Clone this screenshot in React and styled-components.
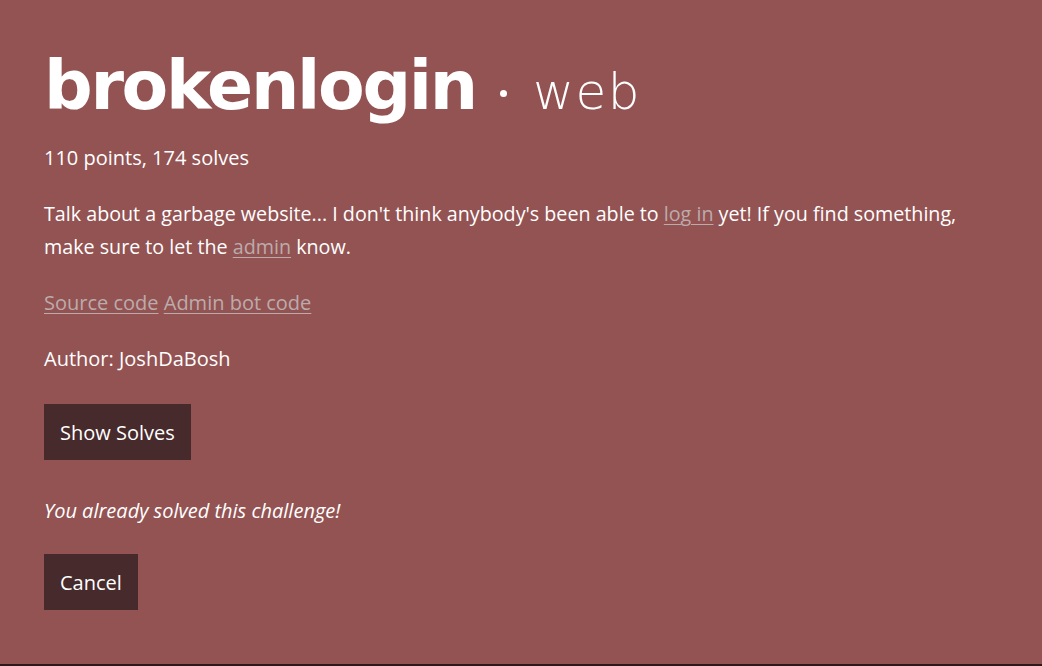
import React from "react";
import styled, { createGlobalStyle } from "styled-components";

const GlobalStyle = createGlobalStyle`
  html, body {
    margin: 0;
    padding: 0;
    background: #2a1a1b;
  }
  body {
    font-family: "Open Sans", "Noto Sans", sans-serif;
    color: #ffffff;
  }
`;

const Modal = styled.div`
  box-sizing: border-box;
  width: 1042px;
  height: 664px;
  background: #935353;
  padding: 48px 44px 0;
  display: flex;
  flex-direction: column;
  align-items: flex-start;
`;

const Title = styled.h1`
  margin: 0;
  font-family: "DejaVu Sans", sans-serif;
  font-weight: 700;
  font-size: 68px;
  line-height: 76px;
  letter-spacing: -2.3px;
  white-space: nowrap;
`;

const Dot = styled.span`
  display: inline-block;
  width: 7px;
  height: 7px;
  border-radius: 50%;
  background: #ffffff;
  margin: 0 26px 0 24px;
  vertical-align: 12px;
`;

const Category = styled.span`
  font-weight: 200;
  font-size: 50px;
  line-height: 1;
  letter-spacing: 1.5px;
`;

const Meta = styled.div`
  margin-top: 21px;
  font-size: 20px;
  line-height: 26px;
`;

const Text = styled.p`
  margin: ${(p) => p.$top || 0}px 0 0;
  font-size: ${(p) => p.$size || 20}px;
  line-height: 33px;
  font-style: ${(p) => (p.$italic ? "italic" : "normal")};
`;

const Link = styled.a`
  color: #bcabab;
  text-decoration: underline;
  text-decoration-thickness: 1px;
  text-underline-offset: 3px;
`;

const Button = styled.button`
  margin-top: ${(p) => p.$top}px;
  height: 56px;
  padding: 0 16px;
  border: none;
  background: #472a2b;
  color: #ffffff;
  font-family: "Open Sans", "Noto Sans", sans-serif;
  font-size: 20px;
  cursor: pointer;
`;

export default function App() {
  return (
    <>
      <GlobalStyle />
      <Modal>
        <Title>
          brokenlogin<Dot />
          <Category>web</Category>
        </Title>
        <Meta>110 points, 174 solves</Meta>
        <Text $top={26} $size={19.7}>
          Talk about a garbage website... I don't think anybody's been able to{" "}
          <Link>log in</Link> yet! If you find something, make sure to let the{" "}
          <Link>admin</Link> know.
        </Text>
        <Text $top={23}>
          <Link>Source code</Link> <Link>Admin bot code</Link>
        </Text>
        <Text $top={23}>Author: JoshDaBosh</Text>
        <Button $top={29}>Show Solves</Button>
        <Text $top={34} $italic>
          You already solved this challenge!
        </Text>
        <Button $top={27}>Cancel</Button>
      </Modal>
    </>
  );
}
